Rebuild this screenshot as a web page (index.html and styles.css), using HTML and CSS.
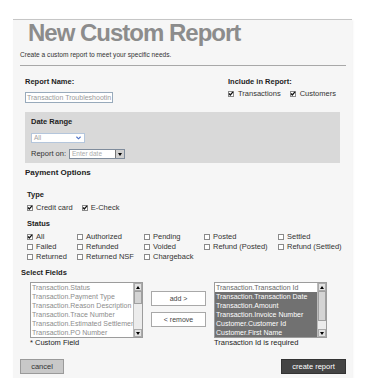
FILE: index.html
```html
<!DOCTYPE html>
<html>
   <head>
      <meta charset="utf-8">
      <title>New Custom Report</title>
      <link rel="stylesheet" href="styles.css">
   </head>
   <body>
      <div class="panel">
        <h1 class="title">New Custom Report</h1>
        <p class="intro">Create a custom report to meet your specific needs.</p>
        <div class="rule"></div>

        <div class="toprow">
          <div class="namecol">
            <div class="lbl">Report Name:</div>
            <div class="textbox">Transaction Troubleshootin</div>
          </div>
          <div class="inccol">
            <div class="lbl">Include in Report:</div>
            <div class="incchecks">
              <span class="opt wide"><span class="cb on"><svg viewBox="0 0 6 6"><path d="M1 2.5 L2.3 4 L5 0.8" /></svg></span>Transactions</span>
              <span class="opt wide"><span class="cb on"><svg viewBox="0 0 6 6"><path d="M1 2.5 L2.3 4 L5 0.8" /></svg></span>Customers</span>
            </div>
          </div>
        </div>

        <div class="datebox">
          <div class="lbl">Date Range</div>
          <div class="selectbox">All<svg class="chev" viewBox="0 0 6 4"><path d="M0.5 0.5 L3 3 L5.5 0.5" /></svg></div>
          <div class="reporton">
            Report on:
            <div class="dateinput"><span class="ph">Enter date</span><span class="dd"></span></div>
          </div>
        </div>

        <div class="payhead">Payment Options</div>
        <div class="payment">
          <div class="sub">Type</div>
          <div class="typerow">
            <span class="opt"><span class="cb on"><svg viewBox="0 0 6 6"><path d="M1 2.5 L2.3 4 L5 0.8" /></svg></span>Credit card</span>
            <span class="opt"><span class="cb on"><svg viewBox="0 0 6 6"><path d="M1 2.5 L2.3 4 L5 0.8" /></svg></span>E-Check</span>
          </div>
          <div class="sub status">Status</div>
          <div class="statusgrid">
            <span class="opt"><span class="cb on"><svg viewBox="0 0 6 6"><path d="M1 2.5 L2.3 4 L5 0.8" /></svg></span>All</span>
            <span class="opt"><span class="cb"></span>Authorized</span>
            <span class="opt"><span class="cb"></span>Pending</span>
            <span class="opt"><span class="cb"></span>Posted</span>
            <span class="opt"><span class="cb"></span>Settled</span>
            <span class="opt"><span class="cb"></span>Failed</span>
            <span class="opt"><span class="cb"></span>Refunded</span>
            <span class="opt"><span class="cb"></span>Voided</span>
            <span class="opt"><span class="cb"></span>Refund (Posted)</span>
            <span class="opt"><span class="cb"></span>Refund (Settled)</span>
            <span class="opt"><span class="cb"></span>Returned</span>
            <span class="opt"><span class="cb"></span>Returned NSF</span>
            <span class="opt"><span class="cb"></span>Chargeback</span>
          </div>
        </div>

        <div class="fieldshead">Select Fields</div>
        <div class="fields">
          <div class="listbox">
            <div class="items">
              <div>Transaction.Status</div>
              <div>Transaction.Payment Type</div>
              <div>Transaction.Reason Description</div>
              <div>Transaction.Trace Number</div>
              <div>Transaction.Estimated Settlement Date</div>
              <div>Transaction.PO Number</div>
            </div>
            <div class="scroll">
              <div class="sbtn"><span class="up"></span></div>
              <div class="thumb short"></div>
              <div class="track"></div>
              <div class="sbtn"><span class="down"></span></div>
            </div>
          </div>
          <div class="movebtns">
            <div class="movebtn">add &gt;</div>
            <div class="movebtn">&lt; remove</div>
          </div>
          <div class="listbox chosen">
            <div class="items">
              <div class="first">Transaction.Transaction Id</div>
              <div>Transaction.Transaction Date</div>
              <div>Transaction.Amount</div>
              <div>Transaction.Invoice Number</div>
              <div>Customer.Customer Id</div>
              <div>Customer.First Name</div>
            </div>
            <div class="scroll">
              <div class="sbtn"><span class="up"></span></div>
              <div class="thumb long"></div>
              <div class="track"></div>
              <div class="sbtn"><span class="down"></span></div>
            </div>
          </div>
        </div>
        <div class="notes">
          <span class="note left">* Custom Field</span>
          <span class="note">Transaction Id is required</span>
        </div>

        <div class="actions">
          <div class="btn cancel">cancel</div>
          <div class="btn create">create report</div>
        </div>
      </div>
   </body>
</html>
```

FILE: styles.css
```css
body {
  margin: 0;
  background: #fff;
  font-family: "Liberation Sans", Arial, sans-serif;
  color: #333;
}
.panel {
  margin: 19px 0 0 13px;
  width: 339px;
  padding: 1px 0 4px 0;
  background: #f6f6f6;
  border-top: 1px solid #c6c6c6;
  box-shadow: 1px 1px 2px rgba(0,0,0,0.06);
}
.title {
  margin: 0 0 0 15px;
  font-size: 24px;
  line-height: 24px;
  letter-spacing: -1px;
  font-weight: bold;
  color: #8c8c8c;
}
.intro {
  margin: 5px 0 0 7px;
  font-size: 6.6px;
  line-height: 10px;
  color: #333;
}
.rule {
  margin: 5px 0 0 7px;
  width: 326px;
  height: 1px;
  background: #a8a8a8;
}
.lbl {
  font-size: 7.5px;
  line-height: 10px;
  font-weight: bold;
  color: #222;
}
.toprow {
  display: flex;
  margin: 11px 0 0 12px;
}
.namecol {
  width: 203px;
}
.textbox {
  margin-top: 5px;
  width: 85px;
  height: 9px;
  border: 1px solid #98aabb;
  background: #fff;
  font-size: 7px;
  line-height: 9px;
  color: #9a9a9a;
  padding-left: 1px;
  overflow: hidden;
  white-space: nowrap;
}
.incchecks {
  margin-top: 2px;
  display: flex;
  gap: 9px;
}
.opt {
  display: inline-flex;
  align-items: center;
  gap: 3px;
  font-size: 7.5px;
  line-height: 10px;
  color: #333;
  white-space: nowrap;
}
.opt.wide {
  gap: 4px;
}
.cb {
  display: inline-block;
  width: 4px;
  height: 4px;
  border: 1px solid #8a8a8a;
  background: #fff;
  position: relative;
}
.cb svg {
  position: absolute;
  left: -1px;
  top: -1px;
  width: 6px;
  height: 6px;
}
.cb svg path {
  fill: none;
  stroke: #111;
  stroke-width: 1.3;
}
.datebox {
  margin: 9px 0 0 12px;
  width: 309px;
  padding: 5px 0 4px 6px;
  background: #d9d9d9;
}
.selectbox {
  margin-top: 6px;
  width: 50px;
  height: 8px;
  padding-left: 2px;
  border: 1px solid #b4c6dc;
  background: #fff;
  font-size: 6.5px;
  line-height: 8px;
  color: #a0a0a0;
  position: relative;
}
.chev {
  position: absolute;
  right: 3px;
  top: 2px;
  width: 5px;
  height: 4px;
}
.chev path {
  fill: none;
  stroke: #4a6fc4;
  stroke-width: 1.3;
}
.reporton {
  margin-top: 6px;
  display: flex;
  align-items: center;
  gap: 3px;
  font-size: 7.5px;
  line-height: 10px;
  color: #333;
}
.dateinput {
  display: flex;
  width: 54px;
  height: 8px;
  border: 1px solid #7f8c9c;
  background: #fff;
}
.ph {
  flex: 1;
  padding-left: 2px;
  font-size: 6.5px;
  line-height: 8px;
  color: #aaa;
}
.dd {
  width: 8px;
  height: 8px;
  background: #cfcfcf;
  border-left: 1px solid #777;
  position: relative;
}
.dd::after {
  content: "";
  position: absolute;
  left: 2px;
  top: 3px;
  border-left: 2px solid transparent;
  border-right: 2px solid transparent;
  border-top: 3px solid #000;
}
.payhead {
  margin: 5px 0 0 12px;
  font-size: 8px;
  line-height: 10px;
  font-weight: bold;
  color: #222;
}
.payment {
  margin: 12px 0 0 14px;
}
.sub {
  font-size: 7.5px;
  line-height: 10px;
  font-weight: bold;
  color: #222;
}
.sub.status {
  margin-top: 6px;
}
.typerow {
  margin-top: 3px;
  display: flex;
  gap: 9px;
}
.statusgrid {
  margin-top: 3px;
  display: grid;
  grid-template-columns: 50px 67px 60px 74px auto;
}
.fieldshead {
  margin: 6px 0 0 8px;
  font-size: 7.5px;
  line-height: 10px;
  font-weight: bold;
  color: #222;
}
.fields {
  margin: 4px 0 0 17px;
  display: flex;
  gap: 8px;
}
.listbox {
  display: flex;
  width: 111px;
  height: 54px;
  border: 1px solid #9c9c9c;
  background: #fff;
}
.items {
  flex: 1;
  overflow: hidden;
  padding-left: 1px;
  font-size: 7px;
  line-height: 9px;
  color: #8c8c8c;
  white-space: nowrap;
}
.chosen .items {
  background: #717171;
  color: #fff;
  padding-left: 0;
}
.chosen .items div {
  padding-left: 1px;
}
.chosen .items .first {
  background: #fff;
  color: #666;
}
.scroll {
  width: 8px;
  display: flex;
  flex-direction: column;
  background: #ececec;
  border-left: 1px solid #bbb;
}
.sbtn {
  height: 8px;
  background: #e2e2e2;
  border: 1px solid #aaa;
  box-sizing: border-box;
  position: relative;
}
.up, .down {
  position: absolute;
  left: 1px;
  top: 2px;
  border-left: 2px solid transparent;
  border-right: 2px solid transparent;
}
.up {
  border-bottom: 3px solid #000;
}
.down {
  border-top: 3px solid #000;
}
.thumb {
  background: #d4d4d4;
  border: 1px solid #a0a0a0;
  box-sizing: border-box;
}
.thumb.short {
  height: 13px;
}
.thumb.long {
  height: 30px;
}
.track {
  flex: 1;
}
.movebtns {
  display: flex;
  flex-direction: column;
  gap: 6px;
  padding-top: 9px;
}
.movebtn {
  width: 53px;
  height: 13px;
  border: 1px solid #a8a8a8;
  background: #fff;
  text-align: center;
  font-size: 7px;
  line-height: 13px;
  color: #444;
}
.notes {
  display: flex;
  margin-left: 17px;
  font-size: 7.5px;
  line-height: 9px;
  color: #222;
}
.note.left {
  width: 184px;
}
.actions {
  display: flex;
  justify-content: space-between;
  margin: 12px 6px 0 7px;
}
.btn {
  height: 13px;
  font-size: 7.5px;
  line-height: 13px;
  text-align: center;
}
.cancel {
  width: 42px;
  background: #c8c8c8;
  border: 1px solid #9a9a9a;
  color: #333;
}
.create {
  width: 63px;
  background: #444;
  border: 1px solid #333;
  color: #fff;
}
```
